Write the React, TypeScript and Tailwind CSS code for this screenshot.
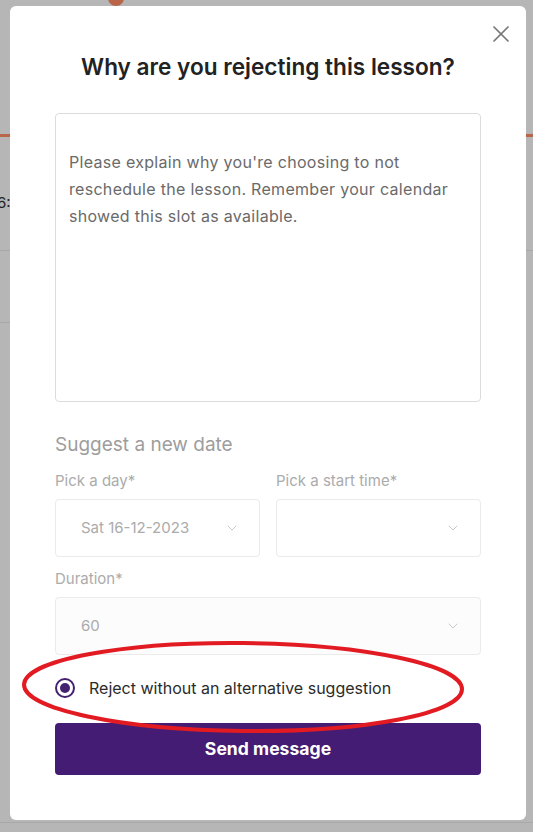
import React from "react";
import { ChevronDown, X } from "lucide-react";

const font = { fontFamily: "Inter, 'Noto Sans', sans-serif" };

function Select({ value, className = "" }: { value?: string; className?: string }) {
  return (
    <div
      className={`flex h-[58px] items-center justify-between rounded-[4px] border border-[#ebebeb] pl-[25px] pr-[19px] ${className}`}
    >
      <span className="text-[15px] text-[#ababab]">{value ?? ""}</span>
      <ChevronDown size={16} strokeWidth={1.4} color="#c4c4c4" />
    </div>
  );
}

function Field({ label, children }: { label: string; children: React.ReactNode }) {
  return (
    <div className="flex flex-col gap-[8px]">
      <div className="text-[15px] leading-[20px] text-[#ababab]">{label}</div>
      {children}
    </div>
  );
}

export default function App() {
  return (
    <div className="relative h-[832px] w-[533px] overflow-hidden bg-[#b6b6b6]" style={font}>
      {/* dimmed page behind the overlay */}
      <div className="absolute left-[108px] top-[-10px] h-[16px] w-[16px] rounded-full bg-[#b9654a]" />
      <div className="absolute left-0 top-[134px] h-[3px] w-[10px] bg-[#b9654a]" />
      <div className="absolute right-0 top-[134px] h-[3px] w-[7px] bg-[#b9654a]" />
      <div className="absolute left-0 top-[250px] h-px w-[10px] bg-[#a8a8a8]" />
      <div className="absolute left-0 top-[322px] h-px w-[10px] bg-[#a8a8a8]" />
      <div className="absolute right-0 top-[250px] h-px w-[7px] bg-[#a8a8a8]" />
      <div className="absolute left-0 top-[822px] h-px w-[533px] bg-[#a8a8a8]" />
      <div className="absolute left-[-3px] top-[193px] text-[15px] leading-[20px] text-[#222]">6:</div>

      {/* modal */}
      <div className="absolute left-[10px] top-[6px] flex w-[516px] flex-col rounded-[6px] bg-white px-[45px] pb-[45px] pt-[47px]">
        <button className="absolute right-[11px] top-[14px] text-[#777]">
          <X size={28} strokeWidth={1.5} />
        </button>
        <h2 className="text-center text-[22.6px] font-semibold leading-[28px] text-[#222]">
          Why are you rejecting this lesson?
        </h2>
        <div className="mt-[32px] h-[289px] rounded-[4px] border border-[#dcdcdc] pl-[13px] pr-[14px] pt-[35px] text-[16px] leading-[27px] tracking-[0.3px] text-[#6a6a6a]">
          Please explain why you're choosing to not reschedule the lesson. Remember your calendar showed
          this slot as available.
        </div>

        <div className="mt-[31px] text-[19px] leading-[24px] text-[#9d9d9d]">Suggest a new date</div>

        <div className="mt-[14px] grid grid-cols-2 gap-x-[16px]">
          <Field label="Pick a day*">
            <Select value="Sat 16-12-2023" />
          </Field>
          <Field label="Pick a start time*">
            <Select />
          </Field>
        </div>

        <div className="mt-[12px]">
          <Field label="Duration*">
            <Select className="bg-[#fcfcfc]" value="60" />
          </Field>
        </div>

        <label className="mt-[23px] flex h-[20px] items-center gap-[14px]">
          <span className="flex h-[20px] w-[20px] items-center justify-center rounded-full border-2 border-[#45206f]">
            <span className="h-[10px] w-[10px] rounded-full bg-[#45206f]" />
          </span>
          <span className="text-[16px] text-[#2b2b2b]">Reject without an alternative suggestion</span>
        </label>

        <button className="mt-[25px] flex h-[52px] w-full items-center justify-center rounded-[4px] bg-[#451c73] text-[17.6px] font-bold text-white">
          Send message
        </button>
      </div>

      {/* red annotation ellipse */}
      <svg className="pointer-events-none absolute left-0 top-0" width="533" height="832">
        <ellipse
          cx="243"
          cy="687"
          rx="219"
          ry="44"
          fill="none"
          stroke="#e21b23"
          strokeWidth="4"
          transform="rotate(0.6 243 687)"
        />
      </svg>
    </div>
  );
}
